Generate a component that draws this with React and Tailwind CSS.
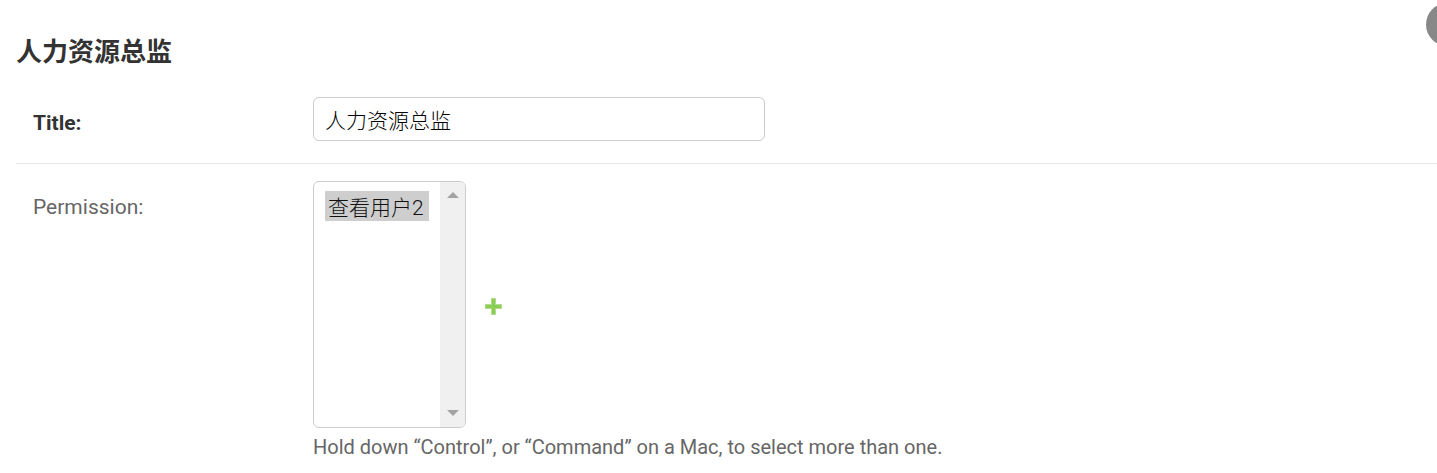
export default function App() {
  return (
    <main className="relative overflow-hidden bg-white pt-8 pl-4 font-[Roboto,'Noto_Sans_CJK_SC',sans-serif] text-[21px] text-[#333]">
      <button type="button" aria-label="History" className="absolute top-[3px] -right-8 h-[43px] w-[43px] rounded-full bg-[#888]" />
      <h1 className="text-[26px] leading-[40px] font-bold">人力资源总监</h1>
      <form>
        <div className="mt-2 flex border-b border-[#e6e6e6] pt-[17px] pb-[22px] pl-[17px]">
          <label htmlFor="title" className="w-[280px] shrink-0 pt-[14px] leading-6 font-bold">Title:</label>
          <input id="title" type="text" defaultValue="人力资源总监" className="h-11 w-[452px] rounded-md border border-[#ccc] px-[11px] font-light text-black" />
        </div>
        <div className="flex pt-[17px] pb-3 pl-[17px]">
          <label htmlFor="permission" className="w-[280px] shrink-0 pt-[14px] leading-6 text-[#666]">Permission:</label>
          <div>
            <div className="flex items-center">
              <div className="flex h-[247px] w-[153px] overflow-hidden rounded-md border border-[#ccc]">
                <select id="permission" multiple defaultValue={["2"]} className="min-w-0 flex-1 [scrollbar-width:none] px-[11px] py-[9px] text-[#333] outline-none">
                  <option value="2" className="h-[30px] bg-[#cecece] px-[3px] pt-0 pb-[2px] leading-[28px] font-light">查看用户2</option>
                </select>
                <div className="flex w-[25px] flex-col items-center justify-between bg-[#f0f0f0] pt-[10px] pb-[11px]">
                  <svg width="12" height="6" viewBox="0 0 12 6"><path d="M0 6 6 0l6 6Z" fill="#a3a3a3" /></svg>
                  <svg width="12" height="6" viewBox="0 0 12 6"><path d="M0 0h12L6 6Z" fill="#a3a3a3" /></svg>
                </div>
              </div>
              <a href="#add" aria-label="Add another permission" className="ml-[19px] pt-1">
                <svg className="block" width="17" height="17" viewBox="0 0 17 17"><path d="M6 0h5v6h6v5h-6v6H6v-6H0V6h6Z" fill="#b0de8c" /><path d="M7 1h3v6h6v3h-6v6H7v-6H1V7h6Z" fill="#8bce55" /></svg>
              </a>
            </div>
            <p className="mt-[7px] text-[20px] leading-6 text-[#666]">Hold down “Control”, or “Command” on a Mac, to select more than one.</p>
          </div>
        </div>
      </form>
    </main>
  );
}
